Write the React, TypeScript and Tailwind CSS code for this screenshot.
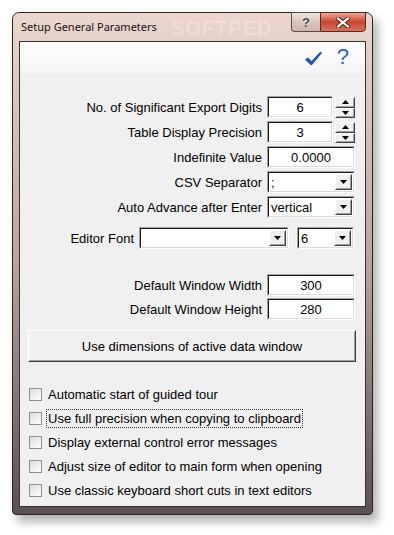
import React from "react";

const ui = { fontFamily: '"Liberation Sans", Arial, sans-serif' };

function Sunken({ className = "", children }: { className?: string; children?: React.ReactNode }) {
  return (
    <div className={`border border-t-[#a0a0a0] border-l-[#a0a0a0] border-b-white border-r-white ${className}`}>
      <div className="h-full border border-t-[#1a1a1a] border-l-[#1a1a1a] border-b-[#dcdcdc] border-r-[#dcdcdc] bg-white flex items-center">
        {children}
      </div>
    </div>
  );
}

function Arrow({ up = false, size = 7 }: { up?: boolean; size?: number }) {
  const h = Math.ceil(size / 2);
  return (
    <svg width={size} height={h} viewBox={`0 0 ${size} ${h}`}>
      <polygon points={up ? `0,${h} ${size},${h} ${size / 2},0` : `0,0 ${size},0 ${size / 2},${h}`} fill="#000" />
    </svg>
  );
}

function Raised({ className = "", children }: { className?: string; children?: React.ReactNode }) {
  return (
    <div className={`border border-t-white border-l-white border-b-[#404040] border-r-[#404040] bg-[#f0f0f0] ${className}`}>
      <div className="h-full border border-t-[#f0f0f0] border-l-[#f0f0f0] border-b-[#a0a0a0] border-r-[#a0a0a0] flex items-center justify-center">
        {children}
      </div>
    </div>
  );
}

function Edit({ value, className = "" }: { value: string; className?: string }) {
  return (
    <Sunken className={`h-[22px] ${className}`}>
      <span className="w-full text-center text-[13px] leading-none">{value}</span>
    </Sunken>
  );
}

function Spin() {
  return (
    <div className="flex flex-col w-[20px] h-[21px]">
      <Raised className="h-[11px]">
        <Arrow up size={7} />
      </Raised>
      <Raised className="h-[10px]">
        <Arrow size={7} />
      </Raised>
    </div>
  );
}

function Combo({ value, className = "" }: { value: string; className?: string }) {
  return (
    <Sunken className={`h-[22px] ${className}`}>
      <span className="flex-1 pl-[2px] text-[13px] leading-none">{value}</span>
      <Raised className="w-[17px] h-[16px] mr-[1px]">
        <Arrow size={7} />
      </Raised>
    </Sunken>
  );
}

function Row({ label, children }: { label: string; children: React.ReactNode }) {
  return (
    <div className="flex items-center justify-end gap-[5px] h-[22px] pr-[10px]">
      <span className="text-[13px] leading-none">{label}</span>
      <div className="w-[88px] flex items-center justify-between">{children}</div>
    </div>
  );
}

function Check({ label, focused = false }: { label: string; focused?: boolean }) {
  return (
    <div className="flex items-center h-[24px] pl-[9px] gap-[4px]">
      <div className="w-[13px] h-[13px] border border-[#8e8f8f] bg-gradient-to-br from-[#dcdcdc] to-white" />
      <span
        className={`text-[13px] leading-none px-[1px] py-[2px] border ${
          focused ? "border-dotted border-[#333]" : "border-transparent"
        }`}
      >
        {label}
      </span>
    </div>
  );
}

export default function App() {
  return (
    <div className="w-[394px] h-[535px] bg-white pl-[12px] pt-[12px] text-black" style={ui}>
      <div className="relative w-[361px] h-[503px] flex flex-col rounded-t-[7px] rounded-b-[4px] border border-[#2b2424] bg-gradient-to-b from-[#ead8ce] via-[#b8a49c] to-[#5a5151] px-[6px] pb-[7px] shadow-[5px_7px_10px_rgba(0,0,0,0.3)]">
        {/* title bar */}
        <div className="h-[28px] flex items-center relative">
          <span className="pl-[2px] pt-[1px] text-[11px] text-[#1a1010]" style={{ fontFamily: '"Noto Sans", "Open Sans", sans-serif' }}>
            Setup General Parameters
          </span>
          <span className="absolute left-[152px] top-[5px] text-[20px] font-bold tracking-[1px] text-white/25 leading-none">
            SOFTPED
          </span>
        </div>
        <div className="absolute top-[-1px] right-[6px] flex h-[20px]">
          <div className="w-[29px] border border-[#5a4c48] border-r-0 rounded-bl-[4px] bg-gradient-to-b from-[#efe5e0] via-[#d9c6be] to-[#cdb5aa] flex items-center justify-center">
            <span className="text-[13px] font-bold text-[#4a4a4a] leading-none" style={{ textShadow: "0 0 2px #fff" }}>?</span>
          </div>
          <div className="w-[46px] border border-[#5a2a22] rounded-br-[4px] bg-gradient-to-b from-[#e9a797] via-[#c8432f] to-[#d9705a] flex items-center justify-center">
            <svg width="14" height="11" viewBox="0 0 14 11">
              <path d="M2 1.5 L12 9.5 M12 1.5 L2 9.5" stroke="#4a2018" strokeWidth="4" strokeLinecap="square" />
              <path d="M2 1.5 L12 9.5 M12 1.5 L2 9.5" stroke="#fff" strokeWidth="2.2" strokeLinecap="square" />
            </svg>
          </div>
        </div>

        {/* client */}
        <div className="flex-1 border border-[#3a3232] bg-[#f0f0f0] flex flex-col">
          <div className="h-[31px] bg-gradient-to-b from-white to-[#f4f4f4] flex items-center justify-end pr-[16px] gap-[14px]">
            <svg width="19" height="16" viewBox="0 0 19 16">
              <path d="M1 9.5 L4 7.5 L7.5 11 L16.5 1.5 L18 3 L8 15 L6.5 15 Z" fill="#2456b8" />
            </svg>
            <span className="text-[22px] leading-none text-[#2a62c8] -mt-[1px]">?</span>
          </div>

          <div className="pt-[23px] flex flex-col gap-[3px]">
            <Row label="No. of Significant Export Digits">
              <Edit value="6" className="w-[66px]" />
              <Spin />
            </Row>
            <Row label="Table Display Precision">
              <Edit value="3" className="w-[66px]" />
              <Spin />
            </Row>
            <Row label="Indefinite Value">
              <Edit value="0.0000" className="w-[88px]" />
            </Row>
            <Row label="CSV Separator">
              <Combo value=";" className="w-[88px]" />
            </Row>
            <Row label="Auto Advance after Enter">
              <Combo value="vertical" className="w-[88px]" />
            </Row>
          </div>

          <div className="mt-[9px] flex items-center justify-end h-[22px] pr-[11px]">
            <span className="text-[13px] leading-none mr-[5px]">Editor Font</span>
            <Combo value="" className="w-[150px]" />
            <Combo value="6" className="w-[57px] ml-[8px]" />
          </div>

          <div className="mt-[25px] flex flex-col gap-[2px]">
            <Row label="Default Window Width">
              <Edit value="300" className="w-[88px]" />
            </Row>
            <Row label="Default Window Height">
              <Edit value="280" className="w-[88px]" />
            </Row>
          </div>

          <Raised className="mt-[10px] ml-[8px] mr-[9px] h-[32px]">
            <span className="text-[13px] leading-none">Use dimensions of active data window</span>
          </Raised>

          <div className="mt-[20px] flex flex-col">
            <Check label="Automatic start of guided tour" />
            <Check label="Use full precision when copying to clipboard" focused />
            <Check label="Display external control error messages" />
            <Check label="Adjust size of editor to main form when opening" />
            <Check label="Use classic keyboard short cuts in text editors" />
          </div>
        </div>
      </div>
    </div>
  );
}
